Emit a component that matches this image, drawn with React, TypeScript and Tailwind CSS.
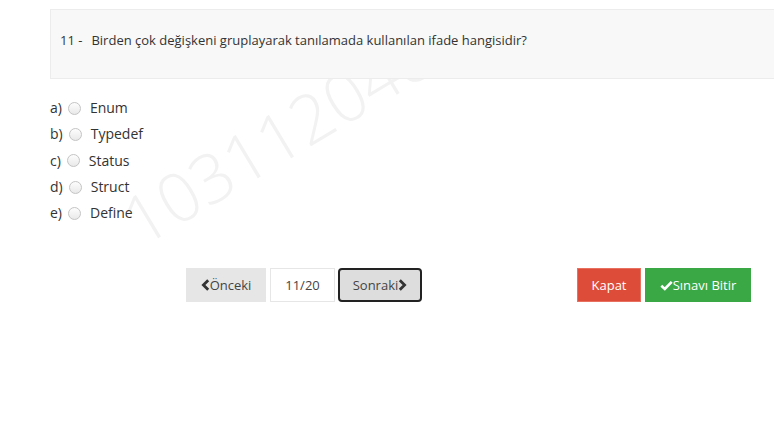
import React from 'react';

const options = [
  { key: 'a)', label: 'Enum' },
  { key: 'b)', label: 'Typedef' },
  { key: 'c)', label: 'Status' },
  { key: 'd)', label: 'Struct' },
  { key: 'e)', label: 'Define' },
];

const Radio: React.FC = () => (
  <span className="inline-block w-[13px] h-[13px] rounded-full border border-[#c4c4c4] bg-gradient-to-b from-[#fdfdfd] to-[#e9e9e9] ml-[6px]" />
);

const ChevronLeft = () => (
  <svg width="9" height="12" viewBox="0 0 9 12" className="inline-block">
    <path d="M7.2 1.2L2.4 6L7.2 10.8" fill="none" stroke="#333" strokeWidth={2.8} strokeLinejoin="miter" />
  </svg>
);

const ChevronRight = () => (
  <svg width="9" height="12" viewBox="0 0 9 12" className="inline-block">
    <path d="M1.8 1.2L6.6 6L1.8 10.8" fill="none" stroke="#333" strokeWidth={2.8} strokeLinejoin="miter" />
  </svg>
);

const Check = () => (
  <svg width="13" height="11" viewBox="0 0 13 11" className="inline-block">
    <path d="M1.3 5.8L4.8 9L11.7 1.8" fill="none" stroke="#fff" strokeWidth={2.6} />
  </svg>
);

export default function App() {
  return (
    <div className="relative w-[774px] h-[443px] overflow-hidden bg-white text-[#333] font-['Open_Sans',sans-serif] text-[13px]">
      {/* watermark (student no) */}
      <div className="absolute left-[128px] top-[192px] origin-left -rotate-[31deg] text-[68px] font-light leading-none text-[#f2f2f2] select-none whitespace-nowrap">
        103112048
      </div>

      <div className="relative pt-[9px] pl-[50px]">
        <div className="w-[760px] h-[70px] border border-[#ececec] bg-[#f8f8f8] pl-[9px] pt-[21px] leading-[18px]">
          11 -<span className="ml-[9px]">Birden çok değişkeni gruplayarak tanılamada kullanılan ifade hangisidir?</span>
        </div>

        <div className="flex flex-col pt-[16px] text-[14px]">
          {options.map((o) => (
            <label key={o.key} className="flex items-center h-[26.3px] leading-[20px]">
              <span>{o.key}</span>
              <Radio />
              <span className="ml-[9px]">{o.label}</span>
            </label>
          ))}
        </div>
      </div>

      <div className="relative flex items-center mt-[42px] pl-[186px] pr-[23px]">
        <div className="flex items-center gap-[4px]">
          <button className="h-[34px] w-[80px] bg-[#e6e6e6] text-[#444] flex items-center justify-center">
            <ChevronLeft />
            <span>Önceki</span>
          </button>
          <div className="h-[34px] w-[65px] bg-white border border-[#e6e6e6] flex items-center justify-center text-[#444]">
            11/20
          </div>
          <button className="h-[34px] w-[84px] bg-[#dddddd] text-[#444] border-2 border-[#222] rounded-[4px] flex items-center justify-center -ml-[1px]">
            <span>Sonraki</span>
            <ChevronRight />
          </button>
        </div>
        <div className="ml-auto flex items-center gap-[4px]">
          <button className="h-[34px] w-[64px] bg-[#dd4b39] border border-[#e8705f] text-white flex items-center justify-center">
            Kapat
          </button>
          <button className="h-[34px] w-[106px] bg-[#39a845] text-white flex items-center justify-center">
            <Check />
            <span>Sınavı Bitir</span>
          </button>
        </div>
      </div>
    </div>
  );
}
